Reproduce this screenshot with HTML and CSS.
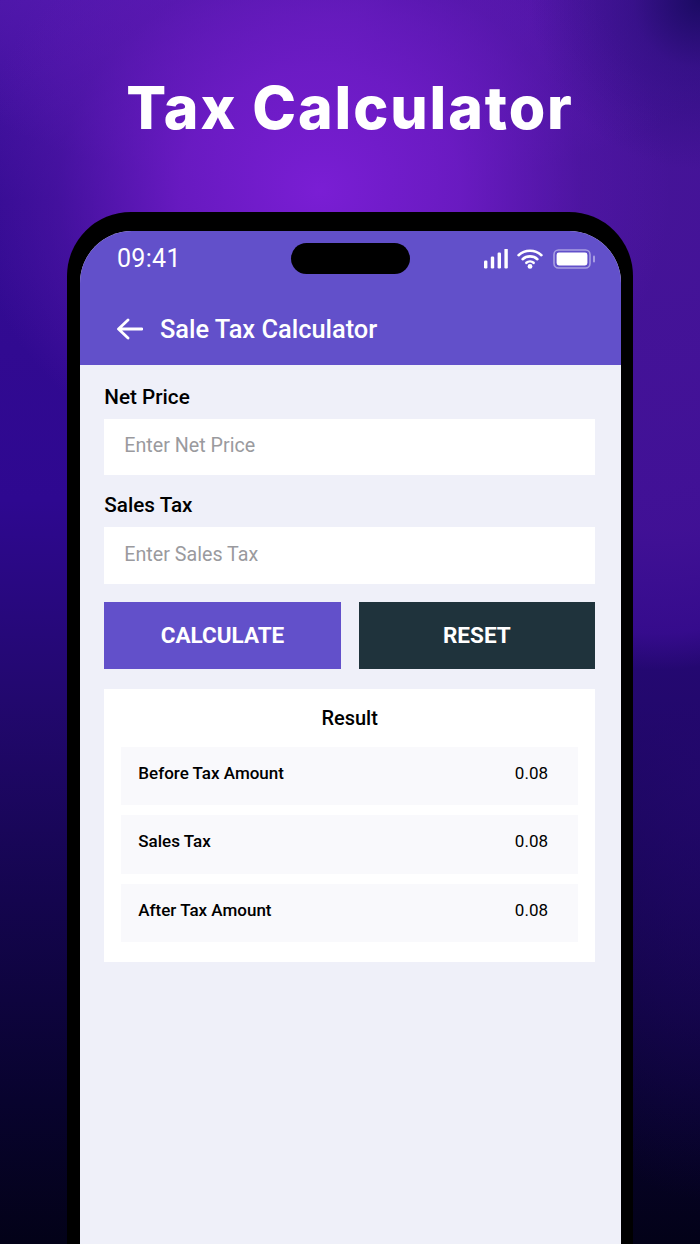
FILE: index.html
```html
<!DOCTYPE html>
<html lang="en">
<head>
<meta charset="utf-8">
<title>Tax Calculator</title>
<link rel="stylesheet" href="styles.css">
</head>
<body>
<main class="poster">
  <h1 class="headline">Tax Calculator</h1>
  <section class="phone">
    <div class="screen">
      <header class="appbar">
        <div class="statusbar">
          <span class="time">09:41</span>
          <span class="island"></span>
          <span class="status-icons">
            <svg class="ic-signal" width="24" height="20" viewBox="0 0 24 20"><g fill="#fff"><rect x="0" y="11.500" width="3.400" height="8" rx="1.200"/><rect x="6.800" y="7.500" width="3.400" height="12" rx="1.200"/><rect x="13.600" y="3.500" width="3.400" height="16" rx="1.200"/><rect x="20.400" y="-.5" width="3.400" height="20" rx="1.200"/></g></svg>
            <svg class="ic-wifi" width="26" height="20" viewBox="0 0 26 20"><g fill="none" stroke="#fff" stroke-width="2.600" stroke-linecap="round"><path d="M1.600 6.200C7.800 .2 18.200 .2 24.400 6.200"/><path d="M5.600 10.200C9.600 6.400 16.400 6.400 20.400 10.200"/><path d="M9.400 13.800C11.400 12 14.600 12 16.600 13.800"/></g><circle cx="13" cy="17.400" r="2.400" fill="#fff"/></svg>
            <svg class="ic-battery" width="43" height="20" viewBox="0 0 43 20"><rect x="1" y="1" width="36" height="18" rx="4.500" fill="none" stroke="#fff" stroke-opacity=".45" stroke-width="1.600"/><rect x="3.600" y="3.600" width="30.800" height="12.800" rx="2.400" fill="#fff"/><rect x="40" y="6.500" width="2" height="7" rx="1" fill="#fff" fill-opacity=".45"/></svg>
          </span>
        </div>
        <div class="titlebar">
          <svg class="ic-back" width="27" height="22" viewBox="0 0 27 22"><path d="M26 11H3M12 2 2.500 11l9.500 9" fill="none" stroke="#fff" stroke-width="2.800" stroke-linecap="round" stroke-linejoin="round"/></svg>
          <span class="apptitle">Sale Tax Calculator</span>
        </div>
      </header>
      <div class="content">
        <label class="label">Net Price</label>
        <div class="field">Enter Net Price</div>
        <label class="label label-second">Sales Tax</label>
        <div class="field field-second">Enter Sales Tax</div>
        <div class="actions">
          <button class="btn btn-primary">CALCULATE</button>
          <button class="btn btn-dark">RESET</button>
        </div>
        <section class="card">
          <h2 class="card-title">Result</h2>
          <div class="rows">
            <div class="row"><span>Before Tax Amount</span><span class="val">0.08</span></div>
            <div class="row"><span>Sales Tax</span><span class="val">0.08</span></div>
            <div class="row"><span>After Tax Amount</span><span class="val">0.08</span></div>
          </div>
        </section>
      </div>
    </div>
  </section>
</main>
</body>
</html>
```
FILE: styles.css
```css
* { box-sizing: border-box; }
html, body { margin: 0; padding: 0; }
body { width: 700px; height: 1244px; overflow: hidden; font-family: Roboto, "Liberation Sans", sans-serif; }
.poster {
  width: 700px; height: 1244px; overflow: hidden;
  display: flex; flex-direction: column; align-items: center;
  background:
    radial-gradient(circle 170px at 700px 0, rgba(24,10,96,.95) 0%, rgba(40,14,120,.55) 40%, rgba(60,20,140,0) 100%),
    radial-gradient(ellipse 350px 300px at 320px 190px, rgba(122,30,212,1) 0%, rgba(112,28,200,.85) 40%, rgba(90,24,175,.4) 75%, rgba(80,20,160,0) 100%),
    radial-gradient(ellipse 420px 170px at 330px 20px, rgba(98,26,186,.9) 0%, rgba(90,25,170,0) 100%),
    radial-gradient(ellipse 330px 460px at 660px 210px, rgba(70,20,152,.95) 0%, rgba(68,18,152,.85) 70%, rgba(60,13,150,.7) 92%, rgba(50,12,130,0) 100%),
    radial-gradient(ellipse 200px 420px at 700px 780px, rgba(36,8,110,.7) 0%, rgba(36,8,110,0) 100%),
    linear-gradient(180deg, #4a16a6 0px, #340c92 200px, #2e0890 500px, #22086e 700px, #14054e 900px, #08032e 1100px, #030218 1244px);
}
.headline {
  margin: 0; padding-top: 68px; height: 212px;
  font-family: Inter, "Open Sans", sans-serif; font-size: 59px; font-weight: 800; line-height: 80px;
  letter-spacing: 1.900px; color: #fff;
}
.phone {
  width: 566px; flex: 1;
  background: #000; border-radius: 64px 64px 0 0;
  padding: 19px 12px 0 13px;
}
.screen {
  height: 100%; background: #eff0f9;
  border-radius: 52px 52px 0 0; overflow: hidden;
}
.appbar { height: 134px; background: #6250ca; padding: 12px 0 0; }
.statusbar { position: relative; height: 32px; display: flex; align-items: center; justify-content: space-between; padding: 0 25.300px 0 37px; }
.time { color: #fff; font-size: 25px; line-height: 32px; letter-spacing: .3px; }
.island { width: 119px; height: 31px; background: #000; border-radius: 16px; position: absolute; left: 211px; top: 0; }
.status-icons { display: flex; align-items: center; gap: 9.300px; }
.titlebar { display: flex; align-items: center; gap: 17px; padding: 40px 0 0 36px; }
.apptitle { color: #fff; font-size: 25.400px; line-height: 28px; font-weight: 500; }
.content { padding: 18px 26px 0 24.300px; color: #000; }
.label { display: block; font-size: 20.700px; line-height: 28px; font-weight: 500; }
.label-second { margin-top: 16.300px; }
.field {
  margin-top: 7.600px; height: 56.500px; background: #fff;
  padding: 0 0 3px 20px; display: flex; align-items: center;
  color: #9a9a9e; font-size: 19.700px;
}
.field-second { height: 57px; padding-bottom: 2px; }
.actions { display: flex; gap: 18px; margin-top: 18px; }
.btn {
  flex: 1; height: 67px; border: 0; color: #fff;
  font-family: Roboto, sans-serif; font-size: 22.500px; font-weight: 700;
  padding: 0;
}
.btn-primary { background: #6250ca; }
.btn-dark { background: #1f333c; }
.card { margin-top: 20px; background: #fff; padding: 15px 17px 20px; }
.card-title { margin: 0 0 15px; text-align: center; font-size: 20px; line-height: 28px; font-weight: 500; }
.rows { display: flex; flex-direction: column; gap: 10.200px; }
.row {
  height: 58.200px; background: #f9f9fc; padding: 0 30px 6px 17px;
  display: flex; align-items: center; justify-content: space-between;
  font-size: 17px; font-weight: 500;
}
.val { font-weight: 400; }
```
